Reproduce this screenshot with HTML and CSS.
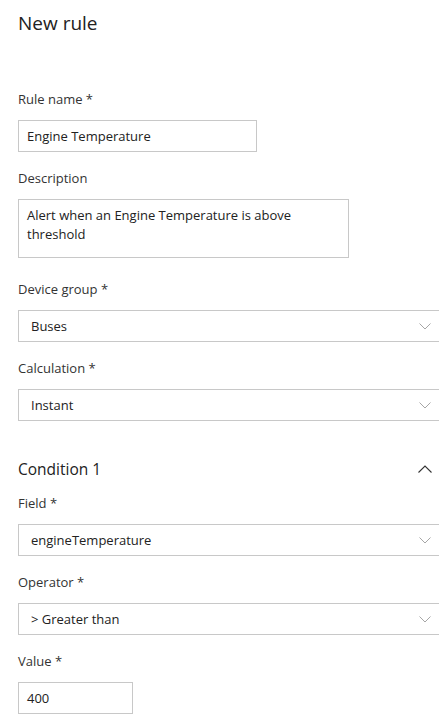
FILE: index.html
```html
<!DOCTYPE html>
<html lang="en">
<head>
<meta charset="utf-8">
<title>New rule</title>
<link rel="stylesheet" href="styles.css">
</head>
<body>
<main class="panel">
  <h1 class="title">New rule</h1>

  <div class="field">
    <div class="label">Rule name *</div>
    <div class="textbox name-box">Engine Temperature</div>
  </div>

  <div class="field field-desc">
    <div class="label">Description</div>
    <div class="textbox desc-box">Alert when an Engine Temperature is above threshold</div>
  </div>

  <div class="field">
    <div class="label">Device group *</div>
    <div class="select"><span>Buses</span><svg class="chev" width="12" height="7" viewBox="0 0 12 7"><path d="M0.5 0.5 L6 6 L11.5 0.5" fill="none" stroke="#a6a6a6" stroke-width="1"/></svg></div>
  </div>

  <div class="field">
    <div class="label">Calculation *</div>
    <div class="select"><span>Instant</span><svg class="chev" width="12" height="7" viewBox="0 0 12 7"><path d="M0.5 0.5 L6 6 L11.5 0.5" fill="none" stroke="#a6a6a6" stroke-width="1"/></svg></div>
  </div>

  <div class="section-head">
    <span class="section-title">Condition 1</span>
    <svg class="chev-up" width="14" height="8" viewBox="0 0 14 8"><path d="M0.5 7.5 L7 1 L13.5 7.5" fill="none" stroke="#333" stroke-width="1.1"/></svg>
  </div>

  <div class="field">
    <div class="label">Field *</div>
    <div class="select"><span>engineTemperature</span><svg class="chev" width="12" height="7" viewBox="0 0 12 7"><path d="M0.5 0.5 L6 6 L11.5 0.5" fill="none" stroke="#a6a6a6" stroke-width="1"/></svg></div>
  </div>

  <div class="field">
    <div class="label">Operator *</div>
    <div class="select"><span>&gt; Greater than</span><svg class="chev" width="12" height="7" viewBox="0 0 12 7"><path d="M0.5 0.5 L6 6 L11.5 0.5" fill="none" stroke="#a6a6a6" stroke-width="1"/></svg></div>
  </div>

  <div class="field">
    <div class="label">Value *</div>
    <div class="textbox value-box">400</div>
  </div>
</main>
</body>
</html>
```

FILE: styles.css
```css
html, body {
  margin: 0;
  padding: 0;
  background: #ffffff;
  overflow: hidden;
}

body {
  font-family: "Open Sans", "Noto Sans", sans-serif;
  color: #333333;
  font-size: 13px;
}

.panel {
  width: 428px;
  padding: 9px 0 0 18px;
  display: flex;
  flex-direction: column;
}

.title {
  margin: 0 0 52px 0;
  font-size: 19px;
  font-weight: 400;
  line-height: 28px;
  color: #222222;
}

.field {
  display: flex;
  flex-direction: column;
  margin-bottom: 16px;
}

.field-desc {
  margin-bottom: 21px;
}

.label {
  line-height: 20px;
  margin-bottom: 11px;
  color: #333333;
}

.textbox {
  box-sizing: border-box;
  border: 1px solid #c8c8c8;
  height: 32px;
  padding: 0 8px;
  line-height: 30px;
  color: #222222;
}

.name-box {
  width: 239px;
}

.desc-box {
  width: 331px;
  height: 59px;
  padding: 6px 8px;
  line-height: 19px;
}

.value-box {
  width: 115px;
}

.select {
  box-sizing: border-box;
  width: 100%;
  height: 32px;
  border: 1px solid #c8c8c8;
  padding: 0 14px 0 12px;
  display: flex;
  align-items: center;
  justify-content: space-between;
  color: #222222;
}

.chev {
  display: block;
}

.section-head {
  display: flex;
  align-items: center;
  justify-content: space-between;
  margin: 21px 0 13px 0;
  height: 22px;
  padding-right: 14px;
}

.section-title {
  font-size: 15.5px;
  line-height: 22px;
  color: #222222;
}

.chev-up {
  display: block;
}
```
